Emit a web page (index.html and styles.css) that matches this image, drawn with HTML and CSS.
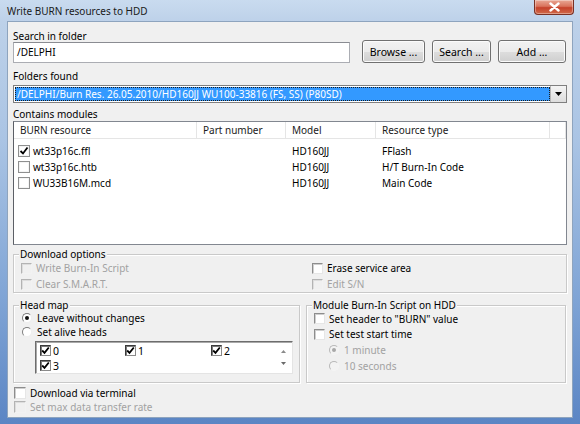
FILE: index.html
```html
<!DOCTYPE html>
<html lang="en">
<head>
  <meta charset="UTF-8">
  <title>Write BURN resources to HDD</title>
  <link rel="stylesheet" href="styles.css">
</head>
<body>

<div class="window">
  <div class="titlebar">
    <span class="title">Write BURN resources to HDD</span>
    <span class="close">
      <svg width="13" height="10" viewBox="0 0 13 10"><path d="M2.5 1.5 L10.5 8.5 M10.5 1.5 L2.5 8.5" stroke="#fff" stroke-width="2.4" stroke-linecap="round"/></svg>
    </span>
  </div>

  <div class="client">
    <!-- search folder -->
    <div class="search-row">
      <div class="search-col">
        <div class="label">Search in folder</div>
        <div class="textbox">/DELPHI</div>
      </div>
      <button class="btn btn-browse">Browse ...</button>
      <button class="btn btn-search">Search ...</button>
      <button class="btn btn-add">Add ...</button>
    </div>

    <!-- folders found -->
    <div class="label label-folders">Folders found</div>
    <div class="combo">
      <div class="combo-value"><span>/DELPHI/Burn Res. 26.05.2010/HD160JJ WU100-33816 (FS, SS) (P80SD)</span></div>
      <div class="combo-btn">
        <svg width="7" height="4" viewBox="0 0 7 4"><path d="M0 0 H7 L3.5 4 Z" fill="#000"/></svg>
      </div>
    </div>

    <!-- modules list -->
    <div class="label label-modules">Contains modules</div>
    <div class="listview">
      <div class="lv-row lv-head">
        <div class="c1">BURN resource</div>
        <div class="c2">Part number</div>
        <div class="c3">Model</div>
        <div class="c4">Resource type</div>
        <div class="c5"></div>
      </div>
      <div class="lv-body">
        <div class="lv-row">
          <div class="c1"><span class="cb cb-list"><svg width="10" height="10" viewBox="0 0 10 10"><path d="M1.5 5 L4 7.5 L8.5 1.5" fill="none" stroke="#000" stroke-width="1.8"/></svg></span>wt33p16c.ffl</div>
          <div class="c2"></div>
          <div class="c3">HD160JJ</div>
          <div class="c4">FFlash</div>
        </div>
        <div class="lv-row">
          <div class="c1"><span class="cb cb-list"></span>wt33p16c.htb</div>
          <div class="c2"></div>
          <div class="c3">HD160JJ</div>
          <div class="c4">H/T Burn-In Code</div>
        </div>
        <div class="lv-row">
          <div class="c1"><span class="cb cb-list"></span>WU33B16M.mcd</div>
          <div class="c2"></div>
          <div class="c3">HD160JJ</div>
          <div class="c4">Main Code</div>
        </div>
      </div>
    </div>

    <!-- download options -->
    <div class="group group-download">
      <div class="group-title">Download options</div>
      <div class="download-grid">
        <div class="opt disabled"><span class="cb"></span>Write Burn-In Script</div>
        <div class="opt"><span class="cb"></span>Erase service area</div>
        <div class="opt disabled"><span class="cb"></span>Clear S.M.A.R.T.</div>
        <div class="opt disabled"><span class="cb"></span>Edit S/N</div>
      </div>
    </div>

    <div class="group-row">
      <!-- head map -->
      <div class="group group-heads">
        <div class="group-title">Head map</div>
        <div class="opt opt-radio1"><span class="radio on"></span>Leave without changes</div>
        <div class="opt opt-radio2"><span class="radio"></span>Set alive heads</div>
        <div class="heads-box">
          <div class="heads-grid">
            <div class="head"><span class="cb cb-head"><svg width="9" height="9" viewBox="0 0 9 9"><path d="M1.2 4.5 L3.5 6.8 L7.8 1.5" fill="none" stroke="#000" stroke-width="1.8"/></svg></span>0</div>
            <div class="head"><span class="cb cb-head"><svg width="9" height="9" viewBox="0 0 9 9"><path d="M1.2 4.5 L3.5 6.8 L7.8 1.5" fill="none" stroke="#000" stroke-width="1.8"/></svg></span>1</div>
            <div class="head"><span class="cb cb-head"><svg width="9" height="9" viewBox="0 0 9 9"><path d="M1.2 4.5 L3.5 6.8 L7.8 1.5" fill="none" stroke="#000" stroke-width="1.8"/></svg></span>2</div>
            <div class="head"><span class="cb cb-head"><svg width="9" height="9" viewBox="0 0 9 9"><path d="M1.2 4.5 L3.5 6.8 L7.8 1.5" fill="none" stroke="#000" stroke-width="1.8"/></svg></span>3</div>
          </div>
          <div class="heads-scroll">
            <svg width="5" height="3" viewBox="0 0 5 3"><path d="M0 3 H5 L2.5 0 Z" fill="#8a8a8a"/></svg>
            <svg width="5" height="3" viewBox="0 0 5 3"><path d="M0 0 H5 L2.5 3 Z" fill="#6a6a6a"/></svg>
          </div>
        </div>
      </div>

      <!-- module burn-in script -->
      <div class="group group-module">
        <div class="group-title">Module Burn-In Script on HDD</div>
        <div class="opt opt-first"><span class="cb"></span>Set header to "BURN" value</div>
        <div class="opt"><span class="cb"></span>Set test start time</div>
        <div class="opt sub disabled"><span class="radio on"></span>1 minute</div>
        <div class="opt sub disabled"><span class="radio"></span>10 seconds</div>
      </div>
    </div>

    <div class="opt opt-bottom opt-terminal"><span class="cb cb-big"></span>Download via terminal</div>
    <div class="opt opt-bottom disabled"><span class="cb cb-big"></span>Set max data transfer rate</div>
  </div>
</div>

</body>
</html>
```

FILE: styles.css
```css
/* ============================
   Base
============================ */
* {
  box-sizing: border-box;
}

body {
  margin: 0;
  font-family: "Noto Sans", "DejaVu Sans", sans-serif;
  font-size: 10px;
  color: #000;
  background: #fff;
}

/* ============================
   Window frame
============================ */
.window {
  width: 580px;
  height: 424px;
  display: flex;
  flex-direction: column;
  padding: 0 7px 6px 7px;
  background: linear-gradient(to bottom, #c9dbef 0, #bdd1e9 22px, #aac4e4 140px, #7fa4d5 300px, #5b85c4 100%);
}

.titlebar {
  height: 21px;
  display: flex;
  justify-content: space-between;
  align-items: flex-start;
}

.title {
  padding-top: 4px;
  color: #1a1a1a;
  font-size: 10px;
}

.close {
  width: 40px;
  height: 15px;
  margin-right: -1px;
  display: flex;
  align-items: center;
  justify-content: center;
  border: 1px solid #7a3124;
  border-top: none;
  border-radius: 0 0 4px 4px;
  background: linear-gradient(to bottom, #e9a895 0, #d9735c 45%, #c5412a 55%, #d06a4a 100%);
  box-shadow: inset 0 0 0 1px rgba(255, 255, 255, 0.35);
}

.client {
  flex: 1;
  background: #f0f0f0;
  border: 1px solid #8ea4be;
  padding: 8px 5px 0 5px;
}

.label {
  line-height: 12px;
  height: 12px;
}

/* ============================
   Search row
============================ */
.search-row {
  display: flex;
  align-items: flex-end;
}

.search-col {
  width: 337px;
}

.textbox {
  height: 21px;
  line-height: 19px;
  padding-left: 3px;
  background: #fff;
  border: 1px solid #abadb3;
  border-top-color: #8a8c92;
}

.btn {
  height: 23px;
  padding: 0;
  font-family: inherit;
  font-size: 10.5px;
  color: #000;
  border: 1px solid #707070;
  border-radius: 3px;
  background: linear-gradient(to bottom, #f2f2f2 0, #ebebeb 50%, #dddddd 51%, #cfcfcf 100%);
  box-shadow: inset 0 0 0 1px #fbfbfb;
}

.btn-browse {
  width: 63px;
  margin-left: 12px;
}

.btn-search {
  width: 59px;
  margin-left: 7px;
}

.btn-add {
  width: 68px;
  margin-left: 7px;
}

/* ============================
   Folders combo
============================ */
.label-folders {
  margin-top: 7px;
}

.combo {
  margin-top: 3px;
  height: 18px;
  display: flex;
  background: #fff;
  border: 1px solid #7f7f7f;
  padding: 1px 0 1px 1px;
}

.combo-value {
  flex: 1;
  background: #3399ff;
  color: #fff;
  border: 1px dotted #1c1c1c;
  line-height: 12px;
  padding-left: 1px;
  white-space: nowrap;
  overflow: hidden;
}

.combo-btn {
  width: 16px;
  margin: -1px 0 -1px 0;
  display: flex;
  align-items: center;
  justify-content: center;
  background: linear-gradient(to bottom, #f4f4f4, #dcdcdc);
  border-left: 1px solid #b5b5b5;
}

/* ============================
   Modules list
============================ */
.label-modules {
  margin-top: 5px;
}

.listview {
  margin-top: 1px;
  height: 124px;
  background: #fff;
  border: 1px solid #828790;
  border-left-color: #5c5f66;
}

.lv-row {
  display: flex;
  height: 16px;
  line-height: 16px;
  white-space: nowrap;
}

.lv-head {
  height: 17px;
  border-bottom: 1px solid #e5e5e5;
  color: #1a1a1a;
}

.lv-head > div {
  border-right: 1px solid #e5e5e5;
}

.lv-body {
  padding-top: 4px;
}

.c1 { width: 183px; padding-left: 6px; }
.c2 { width: 89px; padding-left: 6px; }
.c3 { width: 90px; padding-left: 6px; }
.c4 { width: 174px; padding-left: 6px; }
.c5 { flex: 1; }

.lv-body .c1 {
  padding-left: 4px;
  display: flex;
  align-items: center;
}

/* ============================
   Checkboxes and radios
============================ */
.cb {
  display: inline-flex;
  align-items: center;
  justify-content: center;
  flex: none;
  width: 11px;
  height: 11px;
  margin-right: 4px;
  background: #fff;
  border: 1px solid;
  border-color: #8d8d8d #e6e6e6 #e6e6e6 #8d8d8d;
  box-shadow: inset 1px 1px 0 #cfcfcf;
}

.cb-list {
  width: 12px;
  height: 12px;
  margin-right: 3px;
  border-color: #8e8f8f;
  box-shadow: inset 0 0 0 1px #f4f4f4;
}

.cb-big {
  width: 12px;
  height: 12px;
}

.cb-head {
  width: 11px;
  height: 11px;
  margin-right: 2px;
  border-color: #3a3a3a #8a8a8a #8a8a8a #3a3a3a;
  box-shadow: inset 1px 1px 0 #7a7a7a;
}

.radio {
  display: inline-block;
  flex: none;
  width: 10px;
  height: 10px;
  margin-right: 5px;
  border-radius: 50%;
  background: #fff;
  border: 1px solid;
  border-color: #7d7d7d #eeeeee #eeeeee #7d7d7d;
  position: relative;
}

.radio.on::after {
  content: "";
  position: absolute;
  left: 2px;
  top: 2px;
  width: 4px;
  height: 4px;
  border-radius: 50%;
  background: #111;
}

.opt {
  display: flex;
  align-items: center;
  height: 16px;
  white-space: nowrap;
}

.disabled {
  color: #a2a2a2;
}

.disabled .cb {
  background: #f0f0f0;
  border-color: #b3b3b3 #f2f2f2 #f2f2f2 #b3b3b3;
  box-shadow: inset 1px 1px 0 #dddddd;
}

.disabled .radio {
  background: #f3f3f3;
  border-color: #b8b8b8 #f4f4f4 #f4f4f4 #b8b8b8;
}

.disabled .radio.on::after {
  background: #a8a8a8;
}

/* ============================
   Group boxes
============================ */
.group {
  border: 1px solid #c9c9c9;
  box-shadow: inset 1px 1px 0 #fff, 1px 1px 0 #fff;
}

.group-title {
  display: block;
  width: max-content;
  margin: -7px 0 0 5px;
  padding: 0 1px;
  line-height: 12px;
  height: 12px;
  background: #f0f0f0;
}

.group-download {
  margin-top: 9px;
  height: 39px;
}

.download-grid {
  display: grid;
  grid-template-columns: 291px 1fr;
  padding-left: 7px;
}

.group-row {
  display: flex;
  gap: 6px;
  margin-top: 12px;
}

.group-heads {
  width: 287px;
  height: 78px;
}

.group-heads .opt {
  padding-left: 8px;
}

.opt-radio1 {
  height: 14px;
}

.opt-radio2 {
  height: 13px;
}

.heads-box {
  margin: 3px 0 0 21px;
  width: 258px;
  height: 33px;
  display: flex;
  background: #fff;
  border: 1px solid;
  border-color: #6d6d6d #e4e4e4 #e4e4e4 #6d6d6d;
  box-shadow: inset 1px 1px 0 #a9a9a9;
}

.heads-grid {
  flex: 1;
  display: grid;
  grid-template-columns: 85px 86px 1fr;
  grid-auto-rows: 15px;
  padding: 1px 0 0 4px;
}

.head {
  display: flex;
  align-items: center;
  font-size: 10.5px;
}

.heads-scroll {
  width: 14px;
  display: flex;
  flex-direction: column;
  justify-content: space-around;
  align-items: center;
  padding: 4px 4px 4px 0;
}

.group-module {
  width: 260px;
  height: 78px;
  padding-left: 7px;
}

.group-module .group-title {
  margin-left: -2px;
}

.group-module .opt-first {
  height: 15px;
}

.group-module .sub {
  padding-left: 15px;
}

.opt-bottom {
  height: 14px;
  margin-left: 1px;
}

.opt-terminal {
  margin-top: 3px;
}
```
